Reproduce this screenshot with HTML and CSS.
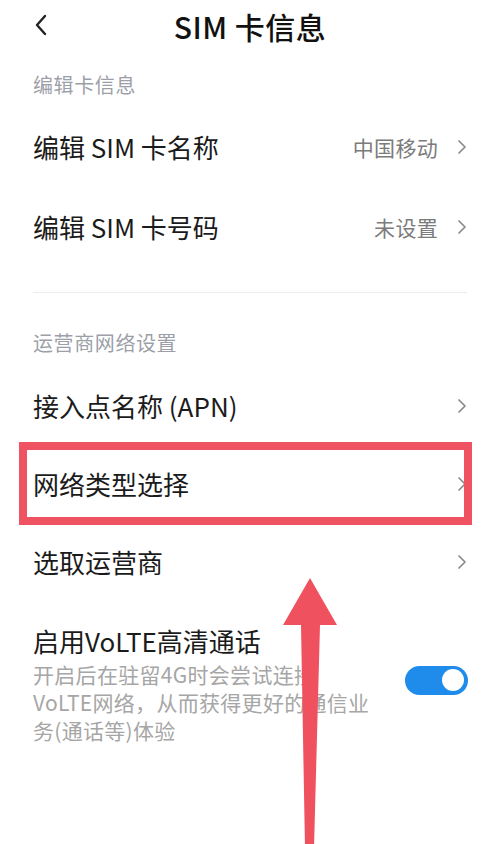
FILE: index.html
```html
<!DOCTYPE html>
<html lang="zh-CN">
<head>
<meta charset="utf-8">
<title>SIM 卡信息</title>
<link rel="stylesheet" href="styles.css">
</head>
<body>
<div class="page">
  <header class="topbar">
    <svg class="back" width="14" height="22" viewBox="0 0 14 22"><path d="M11 2 L3 11 L11 20" fill="none" stroke="#222" stroke-width="2.4" stroke-linecap="round" stroke-linejoin="round"/></svg>
    <h1 class="title">SIM 卡信息</h1>
  </header>

  <div class="section-title">编辑卡信息</div>
  <div class="row">
    <span class="label">编辑 SIM 卡名称</span>
    <span class="trail"><span class="value">中国移动</span><svg class="chev" width="10" height="16" viewBox="0 0 10 16"><path d="M2 2 L8 8 L2 14" fill="none" stroke="#8a8a8a" stroke-width="1.7" stroke-linecap="round" stroke-linejoin="round"/></svg></span>
  </div>
  <div class="row">
    <span class="label">编辑 SIM 卡号码</span>
    <span class="trail"><span class="value">未设置</span><svg class="chev" width="10" height="16" viewBox="0 0 10 16"><path d="M2 2 L8 8 L2 14" fill="none" stroke="#8a8a8a" stroke-width="1.7" stroke-linecap="round" stroke-linejoin="round"/></svg></span>
  </div>

  <div class="divider"></div>

  <div class="section-title section-title--second">运营商网络设置</div>
  <div class="row row--compact">
    <span class="label">接入点名称 (APN)</span>
    <span class="trail"><svg class="chev" width="10" height="16" viewBox="0 0 10 16"><path d="M2 2 L8 8 L2 14" fill="none" stroke="#8a8a8a" stroke-width="1.7" stroke-linecap="round" stroke-linejoin="round"/></svg></span>
  </div>
  <div class="row row--compact row--marked">
    <span class="label">网络类型选择</span>
    <span class="trail"><svg class="chev" width="10" height="16" viewBox="0 0 10 16"><path d="M2 2 L8 8 L2 14" fill="none" stroke="#8a8a8a" stroke-width="1.7" stroke-linecap="round" stroke-linejoin="round"/></svg></span>
    <div class="mark"></div>
  </div>
  <div class="row row--compact">
    <span class="label">选取运营商</span>
    <span class="trail"><svg class="chev" width="10" height="16" viewBox="0 0 10 16"><path d="M2 2 L8 8 L2 14" fill="none" stroke="#8a8a8a" stroke-width="1.7" stroke-linecap="round" stroke-linejoin="round"/></svg></span>
  </div>

  <div class="volte">
    <div class="volte-text">
      <div class="volte-title">启用VoLTE高清通话</div>
      <div class="volte-desc">开启后在驻留4G时会尝试连接<br>VoLTE网络，从而获得更好的通信业<br>务(通话等)体验</div>
    </div>
    <div class="switch"><div class="knob"></div></div>
  </div>

  <svg class="arrow" width="60" height="270" viewBox="0 0 60 270">
    <polygon points="27,0 54,47 37,47 31,270 22,270 18,47 0,47" fill="#f0515e"/>
  </svg>
</div>
</body>
</html>
```

FILE: styles.css
```css
html, body {
  margin: 0;
  padding: 0;
  background: #ffffff;
}

body {
  font-family: "Noto Sans CJK SC", "Noto Sans", sans-serif;
  color: #1b1b1b;
}

.page {
  position: relative;
  width: 500px;
  height: 844px;
  overflow: hidden;
  padding: 0 33px;
  box-sizing: border-box;
}

.topbar {
  position: relative;
  height: 52px;
  display: flex;
  align-items: center;
  justify-content: center;
}

.back {
  position: absolute;
  left: 1px;
  top: 14px;
}

.title {
  margin: 0;
  font-size: 30px;
  font-weight: 500;
  line-height: 38px;
  color: #111;
  letter-spacing: 0.5px;
}

.section-title {
  padding: 19px 0 8px;
  font-size: 20px;
  line-height: 28px;
  color: #9c9fa8;
  letter-spacing: 0.6px;
}

.section-title--second {
  padding: 36px 0 10px;
}

.row {
  height: 80px;
  display: flex;
  align-items: center;
  justify-content: space-between;
}

.row--compact {
  height: 78px;
}

.row--marked {
  position: relative;
}

.label {
  font-size: 26px;
  line-height: 34px;
  color: #1b1b1b;
}

.trail {
  display: flex;
  align-items: center;
  gap: 19px;
}

.value {
  font-size: 21px;
  line-height: 28px;
  color: #7b7b7b;
  letter-spacing: 0.3px;
}

.chev {
  display: block;
}

.divider {
  height: 1px;
  background: #ececec;
  margin-top: 25px;
}

.mark {
  position: absolute;
  left: -14px;
  right: -5px;
  top: -3px;
  bottom: -2px;
  border: 8px solid #ef5361;
}

.volte {
  display: flex;
  align-items: center;
  justify-content: space-between;
  padding-top: 23px;
}

.volte-title {
  font-size: 26px;
  line-height: 34px;
  color: #1b1b1b;
}

.volte-desc {
  margin-top: 2px;
  font-size: 21px;
  line-height: 28px;
  color: #a6a6a6;
  letter-spacing: 0.3px;
}

.switch {
  width: 63px;
  height: 29px;
  border-radius: 15px;
  background: #1f8ceb;
  display: flex;
  align-items: center;
  justify-content: flex-end;
  padding-right: 4px;
  box-sizing: border-box;
  margin-top: -8px;
  margin-right: -1px;
  flex-shrink: 0;
}

.knob {
  width: 22px;
  height: 22px;
  border-radius: 50%;
  background: #ffffff;
}

.arrow {
  position: absolute;
  left: 283px;
  top: 578px;
}
```
